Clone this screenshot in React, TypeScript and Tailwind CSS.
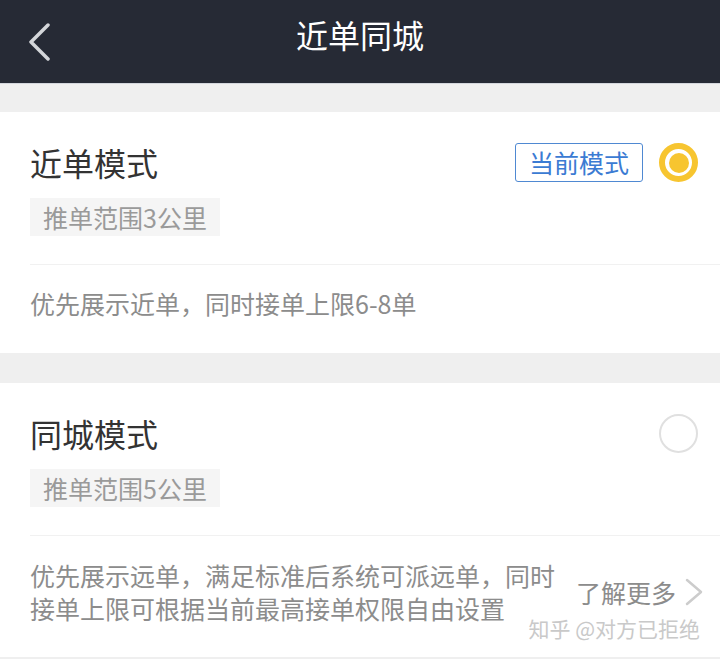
import React from 'react'

function CheckedRadio() {
  return (
    <div className="w-[39px] h-[39px] rounded-full border-[6px] border-[#f7c530] flex items-center justify-center">
      <div className="w-[20px] h-[20px] rounded-full bg-[#f7c530]" />
    </div>
  )
}

function EmptyRadio() {
  return <div className="w-[39px] h-[39px] rounded-full border-2 border-[#e0e0e0]" />
}

function Chip({ text }: { text: string }) {
  return (
    <div className="mt-[16px] w-fit h-[38px] px-[13px] bg-[#f5f5f5] text-[25px] leading-[38px] text-[#9a9a9a]">
      {text}
    </div>
  )
}

export default function App() {
  return (
    <div className="relative w-[720px] h-[659px] overflow-hidden bg-[#efefef] font-['Noto_Sans_CJK_SC','Noto_Sans',sans-serif]">
      {/* header */}
      <div className="h-[84px] bg-[#262a35] border-b border-[#d3d6dc] flex items-center">
        <div className="w-[80px] pl-[27px] flex items-center">
          <svg width="26" height="38" viewBox="0 0 26 38" fill="none">
            <path d="M21 2 L4 19 L21 36" stroke="#d4d6da" strokeWidth="3.5" strokeLinecap="round" strokeLinejoin="round" />
          </svg>
        </div>
        <div className="flex-1 text-center text-white text-[32px] leading-[40px] pb-[16px]">近单同城</div>
        <div className="w-[80px]" />
      </div>

      <div className="h-[28px]" />

      {/* 近单模式 */}
      <div className="bg-white pl-[30px]">
        <div className="pt-[29px] pr-[22px] flex items-center justify-between">
          <div className="text-[32px] leading-[40px] text-[#333333]">近单模式</div>
          <div className="flex items-center gap-[16px] mt-[2px]">
            <div className="h-[39px] px-[13px] border border-[#4f89d2] rounded-[3px] text-[25px] leading-[36px] text-[#3b7bd3]">
              当前模式
            </div>
            <CheckedRadio />
          </div>
        </div>
        <Chip text="推单范围3公里" />
        <div className="mt-[28px] border-t border-[#f1f1f1]" />
        <div className="pt-[22px] pb-[33px] text-[25px] leading-[33px] text-[#8c8c8c]">
          优先展示近单，同时接单上限6-8单
        </div>
      </div>

      <div className="h-[30px]" />

      {/* 同城模式 */}
      <div className="bg-white pl-[30px]">
        <div className="pt-[29px] pr-[22px] flex items-center justify-between">
          <div className="text-[32px] leading-[40px] text-[#333333]">同城模式</div>
          <div className="mt-[2px]">
            <EmptyRadio />
          </div>
        </div>
        <Chip text="推单范围5公里" />
        <div className="mt-[28px] border-t border-[#f1f1f1]" />
        <div className="pt-[23px] pb-[32px] pr-[16px] flex items-center justify-between">
          <div className="shrink-0 text-[25px] leading-[33px] text-[#8c8c8c] whitespace-nowrap">
            <div>优先展示远单，满足标准后系统可派远单，同时</div>
            <div>接单上限可根据当前最高接单权限自由设置</div>
          </div>
          <div className="shrink-0 whitespace-nowrap flex items-center gap-[9px] text-[25px] leading-[33px] text-[#8c8c8c]">
            <span>了解更多</span>
            <svg width="19" height="28" viewBox="0 0 19 28" fill="none">
              <path d="M2 2 L16 14 L2 26" stroke="#cccccc" strokeWidth="2.5" strokeLinecap="round" strokeLinejoin="round" />
            </svg>
          </div>
        </div>
      </div>

      {/* watermark */}
      <div className="absolute right-[20px] top-[614px] text-[21px] leading-[28px] text-[#c9c9c9]">
        知乎 @对方已拒绝
      </div>
    </div>
  )
}
